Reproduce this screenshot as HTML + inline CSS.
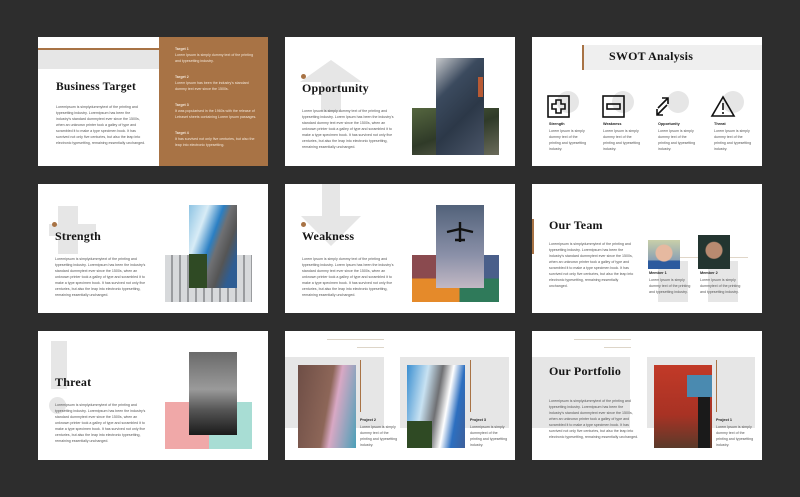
<!DOCTYPE html>
<html><head><meta charset="utf-8"><style>
*{margin:0;padding:0;box-sizing:border-box}
body{width:800px;height:497px;background:#2d2d2d;position:relative;overflow:hidden;font-family:"Liberation Sans",sans-serif}
.s{position:absolute;background:#fff;width:230px;height:129px;overflow:hidden}
.a{position:absolute}
.t{position:absolute;font-family:"Liberation Serif",serif;font-weight:bold;color:#151515;font-size:12px;white-space:nowrap;letter-spacing:0.2px}
.b{position:absolute;font-size:3.6px;line-height:6px;color:#555}
.lbl{position:absolute;font-size:3.8px;font-weight:bold;color:#222}
.g{background:#e6e6e6}
.br{background:#a87345}
.dot{position:absolute;width:5px;height:5px;border-radius:50%;background:#a87345}
</style></head><body>

<!-- Slide 1 -->
<div class="s" style="left:38px;top:37px">
 <div class="a br" style="left:0;top:11px;width:121px;height:2px"></div>
 <div class="a g" style="left:0;top:13px;width:121px;height:19px"></div>
 <div class="t" style="left:18px;top:44px;font-size:11.5px">Business Target</div>
 <div class="b" style="left:18px;top:67px;width:90px">Loremipsum is simplydummytext of the printing and typesetting industry. Loremipsum has been the industry's standard dummytext ever since the 1500s, when an unknown printer took a galley of type and scrambled it to make a type specimen book. It has survived not only five centuries, but also the leap into electronic typesetting, remaining essentially unchanged.</div>
 <div class="a br" style="left:121px;top:0;width:109px;height:129px"></div>
 <div class="b" style="left:137px;top:9px;width:85px;color:#f3e6d8"><b>Target 1</b><br>Lorem Ipsum is simply dummy text of the printing and typesetting industry.</div>
 <div class="b" style="left:137px;top:37px;width:85px;color:#f3e6d8"><b>Target 2</b><br>Lorem Ipsum has been the industry's standard dummy text ever since the 1500s.</div>
 <div class="b" style="left:137px;top:65px;width:85px;color:#f3e6d8"><b>Target 3</b><br>It was popularised in the 1960s with the release of Letraset sheets containing Lorem Ipsum passages.</div>
 <div class="b" style="left:137px;top:93px;width:85px;color:#f3e6d8"><b>Target 4</b><br>It has survived not only five centuries, but also the leap into electronic typesetting.</div>
</div>

<!-- Slide 2 -->
<div class="s" style="left:285px;top:37px">
 <svg class="a" style="left:15px;top:23px" width="62" height="52"><path d="M21 52V22H0L31 0L62 22H41V52Z" fill="#e6e6e6"/></svg>
 <div class="dot" style="left:16px;top:37px"></div>
 <div class="t" style="left:17px;top:44px">Opportunity</div>
 <div class="b" style="left:17px;top:71px;width:92px">Lorem Ipsum is simply dummy text of the printing and typesetting industry. Lorem Ipsum has been the industry's standard dummy text ever since the 1500s, when an unknown printer took a galley of type and scrambled it to make a type specimen book. It has survived not only five centuries, but also the leap into electronic typesetting, remaining essentially unchanged.</div>
 <div class="a" style="left:127px;top:71px;width:87px;height:47px;background:linear-gradient(160deg,#55663f,#2f3a28 50%,#6a6b5a)"></div>
 <div class="a" style="left:151px;top:21px;width:48px;height:97px;background:linear-gradient(135deg,#c7c9cc,#3b4a5e 30%,#2c3848 60%,#4a5568);"></div>
 <div class="a" style="left:193px;top:40px;width:5px;height:20px;background:#b85a34"></div>
</div>

<!-- Slide 3 -->
<div class="s" style="left:532px;top:37px">
 <div class="a" style="left:50px;top:8px;width:180px;height:25px;background:#efefef"></div>
 <div class="a br" style="left:50px;top:8px;width:2px;height:25px"></div>
 <div class="t" style="left:77px;top:12px;font-size:12px">SWOT Analysis</div>
 <div class="a g" style="left:25px;top:54px;width:22px;height:22px;border-radius:50%"></div>
 <div class="a g" style="left:80px;top:54px;width:22px;height:22px;border-radius:50%"></div>
 <div class="a g" style="left:135px;top:54px;width:22px;height:22px;border-radius:50%"></div>
 <div class="a g" style="left:190px;top:54px;width:22px;height:22px;border-radius:50%"></div>
 <svg class="a" style="left:15px;top:58px" width="200" height="24" fill="none" stroke="#111" stroke-width="1.6">
  <rect x="1" y="1" width="21" height="21"/><path d="M9 5h5v4h4v5h-4v4h-5v-4h-4v-5h4z"/>
  <rect x="56" y="1" width="21" height="21"/><rect x="60" y="9" width="13" height="5"/>
  <path d="M111 13l10-10M115 3h6v6M120 10l-10 10M110 14v6h6"/>
  <path d="M176 2L165 21h22Z"/><path d="M176 8v7M176 17v2"/>
 </svg>
 <div class="lbl" style="left:17px;top:85px">Strength</div>
 <div class="lbl" style="left:71px;top:85px">Weakness</div>
 <div class="lbl" style="left:126px;top:85px">Opportunity</div>
 <div class="lbl" style="left:182px;top:85px">Threat</div>
 <div class="b" style="left:17px;top:91px;width:40px">Lorem Ipsum is simply dummy text of the printing and typesetting industry.</div>
 <div class="b" style="left:71px;top:91px;width:40px">Lorem Ipsum is simply dummy text of the printing and typesetting industry.</div>
 <div class="b" style="left:126px;top:91px;width:40px">Lorem Ipsum is simply dummy text of the printing and typesetting industry.</div>
 <div class="b" style="left:182px;top:91px;width:40px">Lorem Ipsum is simply dummy text of the printing and typesetting industry.</div>
</div>

<!-- Slide 4 -->
<div class="s" style="left:38px;top:184px">
 <div class="a g" style="left:20px;top:22px;width:20px;height:48px"></div>
 <div class="a g" style="left:11px;top:40px;width:47px;height:12px"></div>
 <div class="dot" style="left:14px;top:38px"></div>
 <div class="t" style="left:17px;top:45px">Strength</div>
 <div class="b" style="left:17px;top:72px;width:92px">Loremipsum is simplydummytext of the printing and typesetting industry. Loremipsum has been the industry's standard dummytext ever since the 1500s, when an unknown printer took a galley of type and scrambled it to make a type specimen book. It has survived not only five centuries, but also the leap into electronic typesetting, remaining essentially unchanged.</div>
 <div class="a" style="left:127px;top:71px;width:87px;height:47px;background:repeating-linear-gradient(90deg,#d7d9db 0 6px,#9a9c9f 6px 8px)"></div>
 <div class="a" style="left:151px;top:21px;width:48px;height:83px;background:linear-gradient(110deg,#8ec4e3,#d8ecf6 25%,#2a7fc4 45%,#6f7073 55%,#555 70%,#2e5d93 85%);"></div>
 <div class="a" style="left:151px;top:70px;width:18px;height:34px;background:#2f4a24"></div>
</div>

<!-- Slide 5 -->
<div class="s" style="left:285px;top:184px">
 <svg class="a" style="left:16px;top:0" width="60" height="62"><path d="M21 0V32H0L30 62L60 32H39V0Z" fill="#e6e6e6"/></svg>
 <div class="dot" style="left:16px;top:38px"></div>
 <div class="t" style="left:17px;top:45px">Weakness</div>
 <div class="b" style="left:17px;top:72px;width:92px">Lorem Ipsum is simply dummy text of the printing and typesetting industry. Lorem Ipsum has been the industry's standard dummy text ever since the 1500s, when an unknown printer took a galley of type and scrambled it to make a type specimen book. It has survived not only five centuries, but also the leap into electronic typesetting, remaining essentially unchanged.</div>
 <div class="a" style="left:127px;top:71px;width:26px;height:47px;background:linear-gradient(#8a4a4f 50%,#e58a2a 50%)"></div>
 <div class="a" style="left:198px;top:71px;width:16px;height:47px;background:linear-gradient(#4a5f8a 50%,#2f7a5a 50%)"></div>
 <div class="a" style="left:151px;top:21px;width:48px;height:83px;background:linear-gradient(#52627a,#8a90a8 60%,#c2b8c4)"></div>
 <div class="a" style="left:151px;top:104px;width:47px;height:14px;background:linear-gradient(90deg,#e58a2a 50%,#2f7a5a 50%)"></div>
 <svg class="a" style="left:158px;top:36px" width="34" height="24"><path d="M17 2v20M4 12l13-3 13 3M12 20h10" stroke="#111" stroke-width="2.4" fill="none"/></svg>
</div>

<!-- Slide 6 -->
<div class="s" style="left:532px;top:184px">
 <div class="a br" style="left:0;top:35px;width:2px;height:35px"></div>
 <div class="t" style="left:17px;top:34px">Our Team</div>
 <div class="b" style="left:17px;top:57px;width:86px">Loremipsum is simplydummytext of the printing and typesetting industry. Loremipsum has been the industry's standard dummytext ever since the 1500s, when an unknown printer took a galley of type and scrambled it to make a type specimen book. It has survived not only five centuries, but also the leap into electronic typesetting, remaining essentially unchanged.</div>
 <div class="a g" style="left:126px;top:77px;width:30px;height:41px"></div>
 <div class="a g" style="left:176px;top:77px;width:30px;height:41px"></div>
 <div class="a" style="left:140px;top:73px;width:30px;height:1px;background:#e0d6c8"></div>
 <div class="a" style="left:190px;top:73px;width:26px;height:1px;background:#e0d6c8"></div>
 <div class="a" style="left:116px;top:56px;width:32px;height:29px;background:radial-gradient(circle at 50% 45%,#e6b9a0 0 8px,transparent 9px),linear-gradient(#c9cfa9,#8aa0b3 70%,#2c5a9e 70%)"></div>
 <div class="a" style="left:166px;top:51px;width:32px;height:34px;background:radial-gradient(circle at 50% 45%,#b88a70 0 8px,transparent 9px),#233530"></div>
 <div class="lbl" style="left:117px;top:87px">Member 1</div>
 <div class="lbl" style="left:168px;top:87px">Member 2</div>
 <div class="b" style="left:117px;top:93px;width:44px">Lorem Ipsum is simply dummy text of the printing and typesetting industry.</div>
 <div class="b" style="left:168px;top:93px;width:44px">Lorem Ipsum is simply dummytext of the printing and typesetting industry.</div>
</div>

<!-- Slide 7 -->
<div class="s" style="left:38px;top:331px">
 <div class="a g" style="left:13px;top:10px;width:16px;height:48px"></div>
 <div class="a g" style="left:11px;top:66px;width:17px;height:17px;border-radius:50%"></div>
 <div class="t" style="left:17px;top:44px">Threat</div>
 <div class="b" style="left:17px;top:71px;width:92px">Loremipsum is simplydummytext of the printing and typesetting industry. Loremipsum has been the industry's standard dummytext ever since the 1500s, when an unknown printer took a galley of type and scrambled it to make a type specimen book. It has survived not only five centuries, but also the leap into electronic typesetting, remaining essentially unchanged.</div>
 <div class="a" style="left:127px;top:71px;width:44px;height:47px;background:#f0a8a8"></div>
 <div class="a" style="left:171px;top:71px;width:43px;height:47px;background:#a8ddd4"></div>
 <div class="a" style="left:151px;top:21px;width:48px;height:83px;background:linear-gradient(#6a6a6a,#9a9a9a 45%,#555 70%,#1a1a1a)"></div>
</div>

<!-- Slide 8 -->
<div class="s" style="left:285px;top:331px">
 <div class="a" style="left:42px;top:8px;width:57px;height:1px;background:#ddd5c8"></div>
 <div class="a" style="left:72px;top:16px;width:27px;height:1px;background:#ddd5c8"></div>
 <div class="a g" style="left:0;top:26px;width:99px;height:71px"></div>
 <div class="a g" style="left:115px;top:26px;width:109px;height:71px"></div>
 <div class="a" style="left:13px;top:34px;width:58px;height:83px;background:linear-gradient(100deg,#6e4e46,#8d6658 50%,#d8a8c4 62%,#4aa0b8)"></div>
 <div class="a br" style="left:75px;top:29px;width:1px;height:52px"></div>
 <div class="lbl" style="left:75px;top:87px">Project 2</div>
 <div class="b" style="left:75px;top:93px;width:40px">Lorem Ipsum is simply dummy text of the printing and typesetting industry.</div>
 <div class="a" style="left:122px;top:34px;width:58px;height:83px;background:linear-gradient(100deg,#3a8ed0,#c8e2f2 30%,#6f7073 50%,#ffffff 65%,#2c6fc0 80%,#3e5f9a)"></div>
 <div class="a" style="left:122px;top:90px;width:25px;height:27px;background:#2f4a24"></div>
 <div class="a br" style="left:185px;top:29px;width:1px;height:52px"></div>
 <div class="lbl" style="left:185px;top:87px">Project 3</div>
 <div class="b" style="left:185px;top:93px;width:40px">Loremipsum is simply dummytext of the printing and typesetting industry.</div>
</div>

<!-- Slide 9 -->
<div class="s" style="left:532px;top:331px">
 <div class="a" style="left:42px;top:8px;width:57px;height:1px;background:#ddd5c8"></div>
 <div class="a" style="left:72px;top:16px;width:27px;height:1px;background:#ddd5c8"></div>
 <div class="a g" style="left:0;top:26px;width:98px;height:71px"></div>
 <div class="a g" style="left:115px;top:26px;width:108px;height:71px"></div>
 <div class="t" style="left:17px;top:33px">Our Portfolio</div>
 <div class="b" style="left:17px;top:67px;width:90px">Loremipsum is simplydummytext of the printing and typesetting industry. Loremipsum has been the industry's standard dummytext ever since the 1500s, when an unknown printer took a galley of type and scrambled it to make a type specimen book. It has survived not only five centuries, but also the leap into electronic typesetting, remaining essentially unchanged.</div>
 <div class="a" style="left:122px;top:34px;width:58px;height:83px;background:linear-gradient(#c23a28,#a83224 60%,#5a3a2a)"></div>
 <div class="a" style="left:155px;top:44px;width:25px;height:22px;background:#4a8ab0"></div>
 <div class="a" style="left:166px;top:66px;width:12px;height:51px;background:#1a1a1a"></div>
 <div class="a br" style="left:184px;top:29px;width:1px;height:52px"></div>
 <div class="lbl" style="left:184px;top:87px">Project 1</div>
 <div class="b" style="left:184px;top:93px;width:40px">Lorem Ipsum is simply dummy text of the printing and typesetting industry.</div>
</div>

</body></html>
